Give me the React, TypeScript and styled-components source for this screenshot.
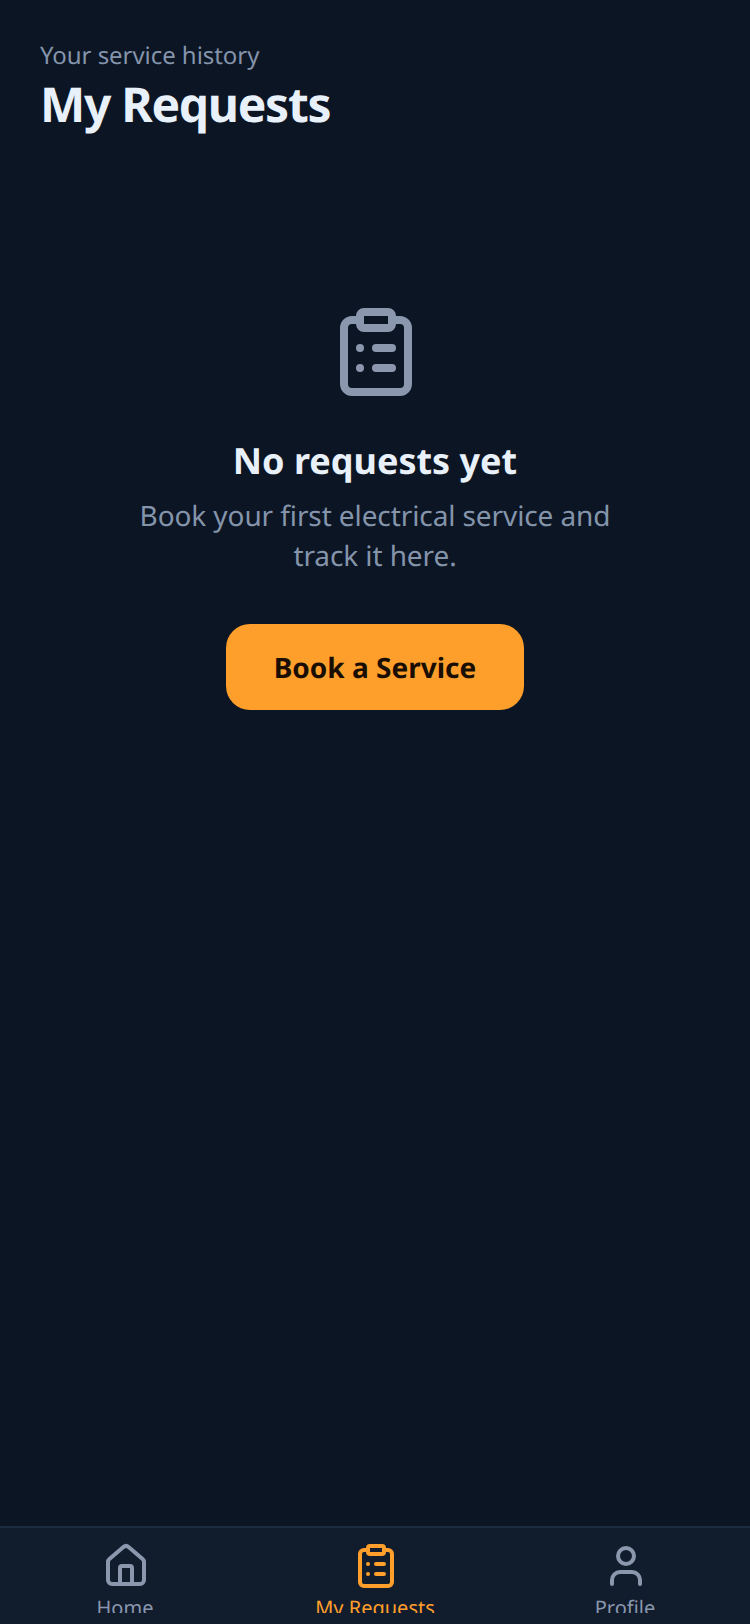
import React from "react";
import styled, { createGlobalStyle } from "styled-components";
import { ClipboardList, House, User } from "lucide-react";

const Global = createGlobalStyle`
  html, body { margin: 0; padding: 0; background: #0c1523; }
  * { box-sizing: border-box; }
`;

const Screen = styled.div`
  width: 750px;
  height: 1624px;
  display: flex;
  flex-direction: column;
  overflow: hidden;
  background: #0c1523;
  font-family: "Noto Sans", "Open Sans", sans-serif;
  text-rendering: geometricPrecision;
`;

const Main = styled.main`
  flex: 1;
  padding: 40px 40px 0;
`;

const Kicker = styled.div`
  font-size: 24px;
  line-height: 32px;
  letter-spacing: -0.05px;
  color: #8494ab;
`;

const Title = styled.h1`
  margin: 3px 0 0;
  font-size: 48px;
  line-height: 60px;
  font-weight: 700;
  letter-spacing: -1.3px;
  color: #e8f0fa;
`;

const Empty = styled.section`
  display: flex;
  flex-direction: column;
  align-items: center;
  padding-top: 169px;
`;

const HeroIcon = styled(ClipboardList)`
  margin-left: 2px;
  color: #8a97ad;
`;

const EmptyTitle = styled.h2`
  margin: 37px 0 0;
  font-size: 36px;
  line-height: 48px;
  font-weight: 700;
  color: #e8f0fa;
`;

const EmptyText = styled.p`
  margin: 11px 0 0;
  width: 520px;
  font-size: 28px;
  line-height: 40px;
  letter-spacing: -0.1px;
  text-align: center;
  color: #8494ab;
`;

const Cta = styled.button`
  margin-top: 48px;
  width: 298px;
  height: 86px;
  padding: 2px 0 0;
  border: 0;
  border-radius: 24px;
  background: #ff9f2b;
  color: #1a0e02;
  font: 700 28px/38px "Noto Sans", "Open Sans", sans-serif;
  text-rendering: geometricPrecision;
`;

const TabBar = styled.nav`
  height: 98px;
  display: grid;
  grid-template-columns: repeat(3, 1fr);
  overflow: hidden;
  background: #111c2d;
  border-top: 2px solid #1e2c40;
`;

const Tab = styled.div<{ $active?: boolean }>`
  display: flex;
  flex-direction: column;
  align-items: center;
  padding-top: 14px;
  color: ${(p) => (p.$active ? "#ff9f2b" : "#8a97ad")};

  svg {
    margin-left: 2px;
    flex: none;
  }
`;

const TabLabel = styled.span`
  margin-top: 4px;
  height: 19px;
  overflow: hidden;
  font-size: 20px;
  line-height: 28px;
  white-space: nowrap;
`;

export default function App() {
  return (
    <Screen>
      <Global />
      <Main>
        <Kicker>Your service history</Kicker>
        <Title>My Requests</Title>
        <Empty>
          <HeroIcon size={96} strokeWidth={2} />
          <EmptyTitle>No requests yet</EmptyTitle>
          <EmptyText>Book your first electrical service and track it here.</EmptyText>
          <Cta>Book a Service</Cta>
        </Empty>
      </Main>
      <TabBar>
        <Tab>
          <House size={48} strokeWidth={2} />
          <TabLabel>Home</TabLabel>
        </Tab>
        <Tab $active>
          <ClipboardList size={48} strokeWidth={2} />
          <TabLabel>My Requests</TabLabel>
        </Tab>
        <Tab>
          <User size={48} strokeWidth={2} />
          <TabLabel>Profile</TabLabel>
        </Tab>
      </TabBar>
    </Screen>
  );
}
